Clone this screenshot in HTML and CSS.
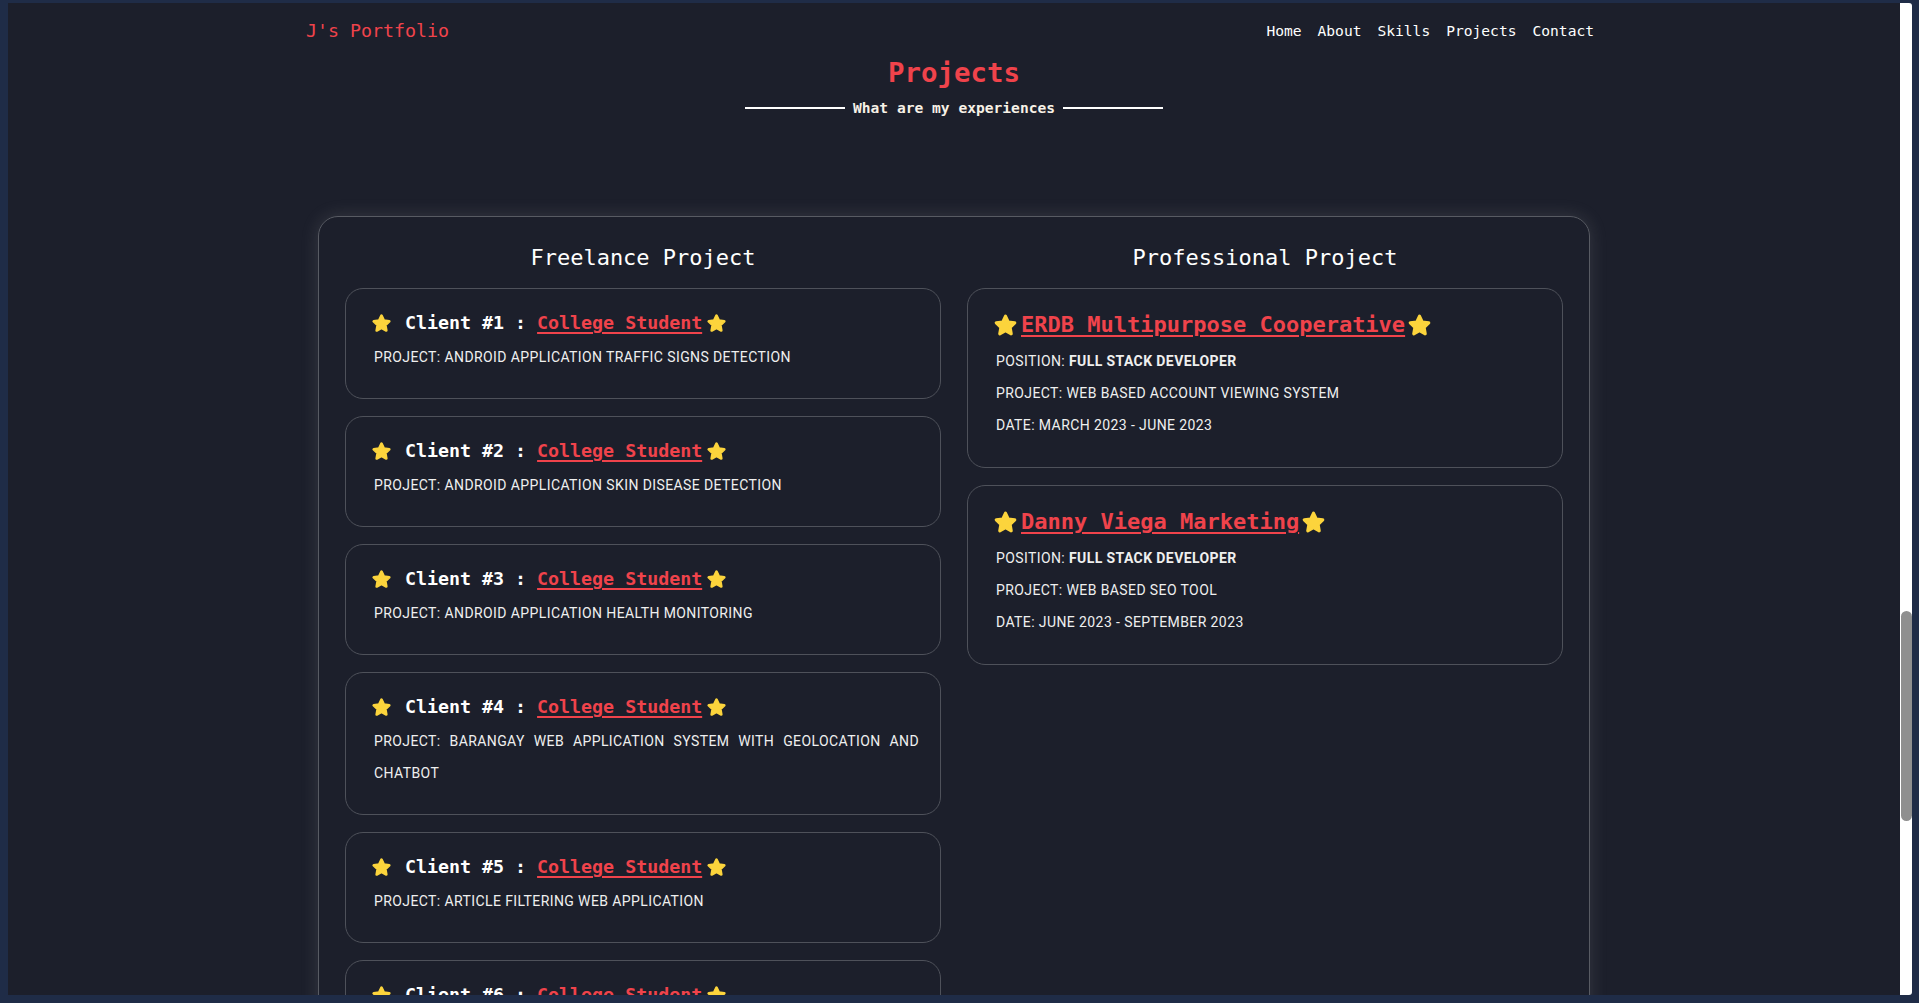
FILE: index.html
```html
<!DOCTYPE html>
<html lang="en">
<head>
<meta charset="utf-8">
<title>J's Portfolio - Projects</title>
<link rel="stylesheet" href="styles.css">
</head>
<body class="frame">
<svg class="defs" width="0" height="0" aria-hidden="true">
  <symbol id="star" viewBox="0 0 24 24">
    <polygon points="12,3 14.7,8.7 20.9,9.5 16.4,13.8 17.5,20 12,17 6.5,20 7.6,13.8 3.1,9.5 9.3,8.7" fill="#fcd43c" stroke="#fcd43c" stroke-width="3" stroke-linejoin="round"/>
  </symbol>
</svg>
<div class="window">
  <main class="viewport">
    <header class="topbar">
      <a class="logo" href="#">J's Portfolio</a>
      <nav class="nav">
        <a href="#">Home</a>
        <a href="#">About</a>
        <a href="#">Skills</a>
        <a href="#">Projects</a>
        <a href="#">Contact</a>
      </nav>
    </header>

    <section class="projects">
      <div class="title-block">
        <h1 class="title">Projects</h1>
        <div class="subtitle"><span class="rule"></span><span>What are my experiences</span><span class="rule"></span></div>
      </div>

      <div class="board">
        <div class="column">
          <h2 class="col-title">Freelance Project</h2>
          <div class="card">
            <h3 class="client"><svg class="star"><use href="#star"/></svg><span class="client-label">Client #1 : </span><a href="#" class="link">College Student</a><svg class="star after"><use href="#star"/></svg></h3>
            <p class="desc">PROJECT: ANDROID APPLICATION TRAFFIC SIGNS DETECTION</p>
          </div>
          <div class="card">
            <h3 class="client"><svg class="star"><use href="#star"/></svg><span class="client-label">Client #2 : </span><a href="#" class="link">College Student</a><svg class="star after"><use href="#star"/></svg></h3>
            <p class="desc">PROJECT: ANDROID APPLICATION SKIN DISEASE DETECTION</p>
          </div>
          <div class="card">
            <h3 class="client"><svg class="star"><use href="#star"/></svg><span class="client-label">Client #3 : </span><a href="#" class="link">College Student</a><svg class="star after"><use href="#star"/></svg></h3>
            <p class="desc">PROJECT: ANDROID APPLICATION HEALTH MONITORING</p>
          </div>
          <div class="card">
            <h3 class="client"><svg class="star"><use href="#star"/></svg><span class="client-label">Client #4 : </span><a href="#" class="link">College Student</a><svg class="star after"><use href="#star"/></svg></h3>
            <p class="desc">PROJECT: BARANGAY WEB APPLICATION SYSTEM WITH GEOLOCATION AND CHATBOT</p>
          </div>
          <div class="card">
            <h3 class="client"><svg class="star"><use href="#star"/></svg><span class="client-label">Client #5 : </span><a href="#" class="link">College Student</a><svg class="star after"><use href="#star"/></svg></h3>
            <p class="desc">PROJECT: ARTICLE FILTERING WEB APPLICATION</p>
          </div>
          <div class="card">
            <h3 class="client"><svg class="star"><use href="#star"/></svg><span class="client-label">Client #6 : </span><a href="#" class="link">College Student</a><svg class="star after"><use href="#star"/></svg></h3>
            <p class="desc">PROJECT: WEB APPLICATION</p>
          </div>
        </div>

        <div class="column">
          <h2 class="col-title">Professional Project</h2>
          <div class="card card-pro">
            <h3 class="company"><svg class="star big"><use href="#star"/></svg><a href="#" class="link">ERDB Multipurpose Cooperative</a><svg class="star big"><use href="#star"/></svg></h3>
            <p class="desc">POSITION: <b>FULL STACK DEVELOPER</b></p>
            <p class="desc">PROJECT: WEB BASED ACCOUNT VIEWING SYSTEM</p>
            <p class="desc">DATE: MARCH 2023 - JUNE 2023</p>
          </div>
          <div class="card card-pro">
            <h3 class="company"><svg class="star big"><use href="#star"/></svg><a href="#" class="link">Danny Viega Marketing</a><svg class="star big"><use href="#star"/></svg></h3>
            <p class="desc">POSITION: <b>FULL STACK DEVELOPER</b></p>
            <p class="desc">PROJECT: WEB BASED SEO TOOL</p>
            <p class="desc">DATE: JUNE 2023 - SEPTEMBER 2023</p>
          </div>
        </div>
      </div>
    </section>
  </main>
  <div class="scrollbar"><div class="thumb"></div></div>
</div>
</body>
</html>
```

FILE: styles.css
```css
* { box-sizing: border-box; }

html, body { margin: 0; padding: 0; }

.frame {
  width: 1919px;
  height: 1003px;
  padding: 3px 7px 8px 8px;
  background: #1f2c47;
  overflow: hidden;
  font-family: "DejaVu Sans Mono", "Liberation Mono", monospace;
}

.defs { position: absolute; }

.window {
  display: flex;
  width: 1904px;
  height: 992px;
}

.viewport {
  flex: 1;
  height: 100%;
  overflow: hidden;
  background: #1c1f2b;
}

.scrollbar {
  width: 12px;
  height: 100%;
  background: #ffffff;
  border-top-right-radius: 3px;
  border-bottom-right-radius: 3px;
  padding-top: 608px;
  display: flex;
  justify-content: center;
}

.thumb {
  width: 11px;
  height: 210px;
  border-radius: 6px;
  background: #8f8f8f;
}

/* header */
.topbar {
  width: 1296px;
  margin: 0 auto;
  padding: 16px 0 0 0;
  display: flex;
  justify-content: space-between;
  align-items: flex-start;
}

.logo {
  color: #f0434b;
  font-size: 18.3px;
  line-height: 24px;
  text-decoration: none;
}

.nav {
  display: flex;
  gap: 16px;
  padding: 1px 8px 0 0;
}

.nav a {
  color: #ffffff;
  font-size: 14.6px;
  line-height: 22px;
  text-decoration: none;
}

/* title */
.title-block {
  display: flex;
  flex-direction: column;
  align-items: center;
  margin-top: 13px;
}

.title {
  margin: 0;
  color: #f0434b;
  font-size: 27.4px;
  line-height: 34px;
  font-weight: bold;
}

.subtitle {
  display: flex;
  align-items: center;
  gap: 8px;
  margin-top: 8px;
  color: #f7f1e6;
  font-size: 14.6px;
  line-height: 20px;
  font-weight: bold;
}

.rule {
  width: 100px;
  height: 2px;
  background: #ffffff;
}

/* board */
.board {
  width: 1272px;
  margin: 98px auto 0;
  padding: 28px 26px 40px;
  border: 1px solid #585b63;
  border-radius: 20px;
  box-shadow: 0 0 18px rgba(190, 190, 190, 0.16);
  display: grid;
  grid-template-columns: 1fr 1fr;
  column-gap: 26px;
  align-items: start;
}

.column {
  display: flex;
  flex-direction: column;
  gap: 17px;
}

.col-title {
  margin: 0;
  text-align: center;
  color: #ffffff;
  font-size: 22px;
  line-height: 26px;
  font-weight: normal;
}

.card {
  border: 1px solid #4e515a;
  border-radius: 18px;
  padding: 16px 21px 25px 25px;
}

.card-pro {
  padding-bottom: 26px;
}

.client, .company {
  margin: 0;
  display: flex;
  align-items: center;
  color: #ffffff;
  font-weight: bold;
  white-space: pre;
}

.client {
  font-size: 18.3px;
  line-height: 36px;
}

.company {
  font-size: 22px;
  line-height: 40px;
}

.client-label { margin-left: 13px; }

.star {
  width: 21px;
  height: 21px;
  flex: none;
}

.star.after { margin-left: 4px; }

.star.big {
  width: 25px;
  height: 25px;
}

.link {
  color: #f0434b;
  text-decoration: underline;
  text-decoration-thickness: 2px;
  text-underline-offset: 3px;
}

.company .link { margin: 0 2px 0 3px; }

.desc {
  margin: 0 0 0 3px;
  color: #efefef;
  font-family: Roboto, "Liberation Sans", sans-serif;
  font-size: 14px;
  font-weight: 400;
  line-height: 32px;
  letter-spacing: 0.4px;
  text-align: justify;
}

.desc b { font-weight: bold; }
```
